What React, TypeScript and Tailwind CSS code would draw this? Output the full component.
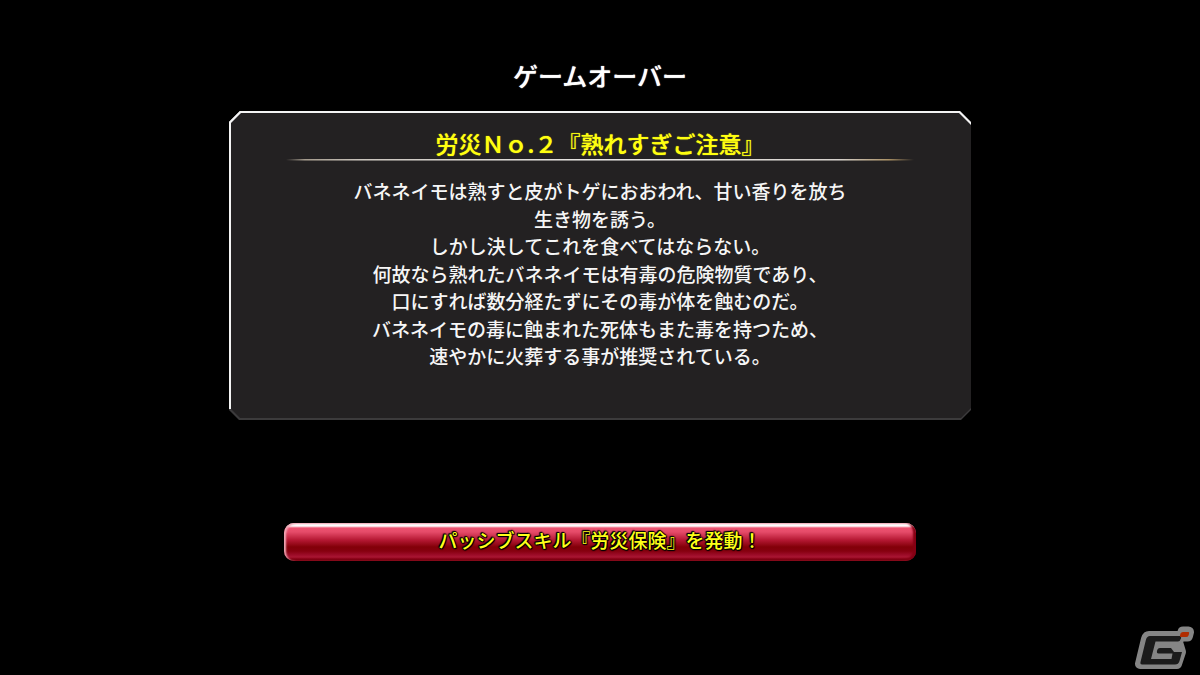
const storyLines: string[] = [
  'バネネイモは熟すと皮がトゲにおおわれ、甘い香りを放ち',
  '生き物を誘う。',
  'しかし決してこれを食べてはならない。',
  '何故なら熟れたバネネイモは有毒の危険物質であり、',
  '口にすれば数分経たずにその毒が体を蝕むのだ。',
  'バネネイモの毒に蝕まれた死体もまた毒を持つため、',
  '速やかに火葬する事が推奨されている。',
];

function Panel() {
  return (
    <section className="w-full max-w-[742px] bg-[#3c3b3c] bg-[linear-gradient(#f4f4f4,#f4f4f4),linear-gradient(#f4f4f4,#f4f4f4)] bg-[length:100%_14px,12px_calc(100%_-_11px)] bg-no-repeat pt-[2px] pb-[2px] pl-[2px] [clip-path:polygon(11px_0,calc(100%_-_11px)_0,100%_11px,100%_calc(100%_-_10px),calc(100%_-_10px)_100%,10px_100%,0_calc(100%_-_10px),0_11px)]">
      <div className="flex flex-col items-center bg-[#232122] pt-[14px] pr-[57px] pb-[49px] pl-[55px] [clip-path:polygon(10px_0,calc(100%_-_12px)_0,100%_12px,100%_calc(100%_-_10px),calc(100%_-_10px)_100%,9px_100%,0_calc(100%_-_9px),0_10px)]">
        <h2 className="text-center text-[23px] leading-8 font-medium text-[#ffff10] [text-shadow:0_0_1px_currentColor]">労災Ｎｏ.２『熟れすぎご注意』</h2>
        <div className="h-[2px] w-full bg-[linear-gradient(90deg,transparent,#a39a8c_3%,#c9c4bd_12%,#e8e6e4_50%,#d5d1cc_88%,#a99065_96%,transparent)] [mask-image:linear-gradient(#000_50%,#0008_50%)]" />
        <div className="mt-4 flex h-48 flex-col justify-between text-center text-[19px] leading-[27px] font-medium text-[#f6f6f6]">
          {storyLines.map((line) => (
            <p key={line}>{line}</p>
          ))}
        </div>
      </div>
    </section>
  );
}

function Logo() {
  return (
    <svg className="absolute right-[4px] bottom-[3px] h-[46px] w-[62px]" viewBox="1134 626 62 46" role="img" aria-label="G">
      <g fill="#858585" stroke="#858585" strokeLinejoin="round">
        <path strokeWidth="10" d="M1149 636H1180L1178 642L1181 652L1177 664H1140L1146 639Q1147 636 1149 636Z" />
        <path strokeWidth="11" d="M1183 632H1188.5L1187.5 636H1182Z" />
      </g>
      <path
        d="M1150 636H1180.5Q1181.5 636 1181 638.5Q1180 641.5 1178 641.5H1155.5L1151 659H1171.5L1172.5 653.5H1158.5Q1156.5 653.5 1157 651Q1157.5 648 1160 648H1171L1174 652H1182L1179.5 661Q1178.5 664.5 1175 664.5H1142Q1140 664.5 1140.5 662L1146 639.5Q1147 636 1150 636Z"
        fill="#1b1b1b"
      />
      <path d="M1183 632H1188.5Q1189.5 632 1189 634L1188.5 635.5Q1188 637 1186 637H1181Q1179.5 637 1180 635.5L1180.5 633.5Q1181 632 1183 632Z" fill="#b02c00" />
    </svg>
  );
}

export default function App() {
  return (
    <main className="relative flex min-h-screen flex-col items-center bg-black px-6 pt-[57px] font-['Noto_Sans_CJK_JP',sans-serif]">
      <h1 className="mb-[18px] text-[25px] leading-9 font-medium text-white [text-shadow:0_0_1px_currentColor]">ゲームオーバー</h1>
      <Panel />
      <button
        type="button"
        className="mt-[103px] flex h-[38px] w-full max-w-[632px] items-center justify-center rounded-[10px] bg-[linear-gradient(180deg,#f8dce2_0px,#ffffff_1px,#ffffff_3px,#ee5270_5px,#e54b69_9px,#b51833_17px,#820008_24px,#86000f_28px,#9d0c29_32px,#a91632_34px,#870014_36px,#65000d_38px)] pb-1 text-[19px] leading-7 font-medium text-[#ffff18] shadow-[inset_2px_1px_2px_#f0a8b6,inset_-3px_-1px_2px_#850014] [text-shadow:1px_0_1px_#000,-1px_0_1px_#000,0_1px_1px_#000,0_-1px_1px_#000,1px_1px_1px_#000,-1px_-1px_1px_#000]"
      >
        パッシブスキル『労災保険』を発動！
      </button>
      <Logo />
    </main>
  );
}
